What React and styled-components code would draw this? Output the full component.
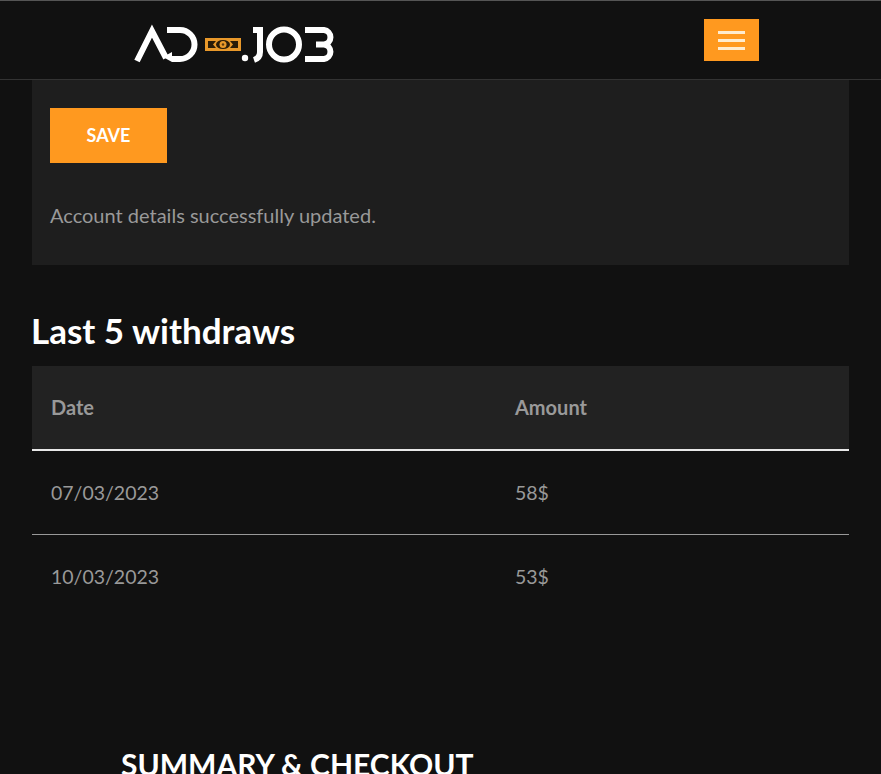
import React from "react";
import styled, { createGlobalStyle } from "styled-components";

const GlobalStyle = createGlobalStyle`
  html, body {
    margin: 0;
    padding: 0;
    height: 774px;
    overflow: hidden;
    background: #111111;
    font-family: Lato, "Liberation Sans", sans-serif;
  }
  * { box-sizing: border-box; }
`;

const Page = styled.div`
  width: 881px;
  height: 774px;
  overflow: hidden;
  background: #111111;
`;

const Header = styled.header`
  height: 80px;
  display: flex;
  align-items: center;
  justify-content: space-between;
  padding: 0 122px 0 134px;
  background: #111111;
  border-top: 1px solid #555;
  border-bottom: 1px solid #333;
`;

const LogoMark = styled.svg`
  display: block;
  margin-top: 8px;
`;

const Burger = styled.button`
  width: 55px;
  height: 42px;
  padding: 0;
  border: 0;
  background: #ff991f;
  display: flex;
  flex-direction: column;
  align-items: center;
  justify-content: center;
  gap: 5px;
`;

const BurgerLine = styled.span`
  display: block;
  width: 27px;
  height: 3px;
  background: #ffeccf;
`;

const Main = styled.main`
  padding: 0 32px;
`;

const Panel = styled.section`
  height: 185px;
  padding: 28px 18px 0;
  background: #1e1e1e;
`;

const SaveButton = styled.button`
  display: block;
  width: 117px;
  height: 55px;
  border: 0;
  padding: 0 0 2px;
  background: #ff991f;
  color: #fff;
  font-family: inherit;
  font-size: 18px;
  font-weight: 700;
  text-transform: uppercase;
`;

const Notice = styled.p`
  margin: 40px 0 0;
  color: #999;
  font-size: 20px;
  line-height: 24px;
`;

const Title = styled.h2`
  margin: 44px 0 15px -1px;
  color: #fff;
  font-size: 35px;
  font-weight: 700;
  line-height: 42px;
`;

const Table = styled.table`
  width: 100%;
  border-collapse: collapse;
  table-layout: fixed;
`;

const HeadCell = styled.th`
  height: 84px;
  padding: 0 19px 2px;
  text-align: left;
  background: #222;
  color: #999;
  font-size: 20px;
  font-weight: 700;
  border-bottom: 2px solid #e8e8e8;
  width: ${(p) => p.$width || "auto"};
`;

const Cell = styled.td`
  height: 84px;
  padding: 0 19px;
  color: #999;
  font-size: 19.5px;
`;

const Row = styled.tr`
  border-bottom: ${(p) => (p.$last ? "0" : "1px solid #999")};
`;

const Summary = styled.h3`
  margin: 128px 0 0 89px;
  color: #fff;
  font-size: 30px;
  font-weight: 700;
  line-height: 36px;
  text-transform: uppercase;
`;

function Logo() {
  return (
    <LogoMark width="202" height="40" viewBox="134 24 202 40" fill="none">
      <g stroke="#fff" strokeWidth="6">
        <path d="M137 61 L152 31 L166 58" />
        <path d="M167 30 H180 A14.5 14.5 0 0 1 180 59 H172" />
        <path d="M253 30 H260 V52 Q260 58 254 60" />
        <circle cx="284" cy="44.5" r="15" />
        <path d="M305 30 H324 A7.3 7.3 0 0 1 324 44.5 H316 M324 44.5 A7.3 7.3 0 0 1 324 59 H305" />
      </g>
      <path d="M163 57 L172 52 L172 62 Z" fill="#fff" />
      <circle cx="245" cy="58" r="3.2" fill="#fff" />
      <rect x="205" y="38" width="36" height="13" fill="#e8982a" />
      <path d="M208 41 H216 L213 44.5 L216 48 H208 Z M238 41 H230 L233 44.5 L230 48 H238 Z" fill="#2a1c08" />
      <ellipse cx="223" cy="44.5" rx="7" ry="4.5" fill="#2a1c08" />
      <circle cx="223" cy="44.5" r="3.5" fill="#e8982a" />
      <circle cx="223" cy="44.5" r="1.2" fill="#5a3a10" />
    </LogoMark>
  );
}

const withdraws = [
  { date: "07/03/2023", amount: "58$" },
  { date: "10/03/2023", amount: "53$" },
];

export default function App() {
  return (
    <Page>
      <GlobalStyle />
      <Header>
        <Logo />
        <Burger aria-label="menu">
          <BurgerLine />
          <BurgerLine />
          <BurgerLine />
        </Burger>
      </Header>
      <Main>
        <Panel>
          <SaveButton>Save</SaveButton>
          <Notice>Account details successfully updated.</Notice>
        </Panel>
        <Title>Last 5 withdraws</Title>
        <Table>
          <thead>
            <tr>
              <HeadCell $width="464px">Date</HeadCell>
              <HeadCell>Amount</HeadCell>
            </tr>
          </thead>
          <tbody>
            {withdraws.map((w, i) => (
              <Row key={w.date} $last={i === withdraws.length - 1}>
                <Cell>{w.date}</Cell>
                <Cell>{w.amount}</Cell>
              </Row>
            ))}
          </tbody>
        </Table>
        <Summary>Summary &amp; Checkout</Summary>
      </Main>
    </Page>
  );
}
